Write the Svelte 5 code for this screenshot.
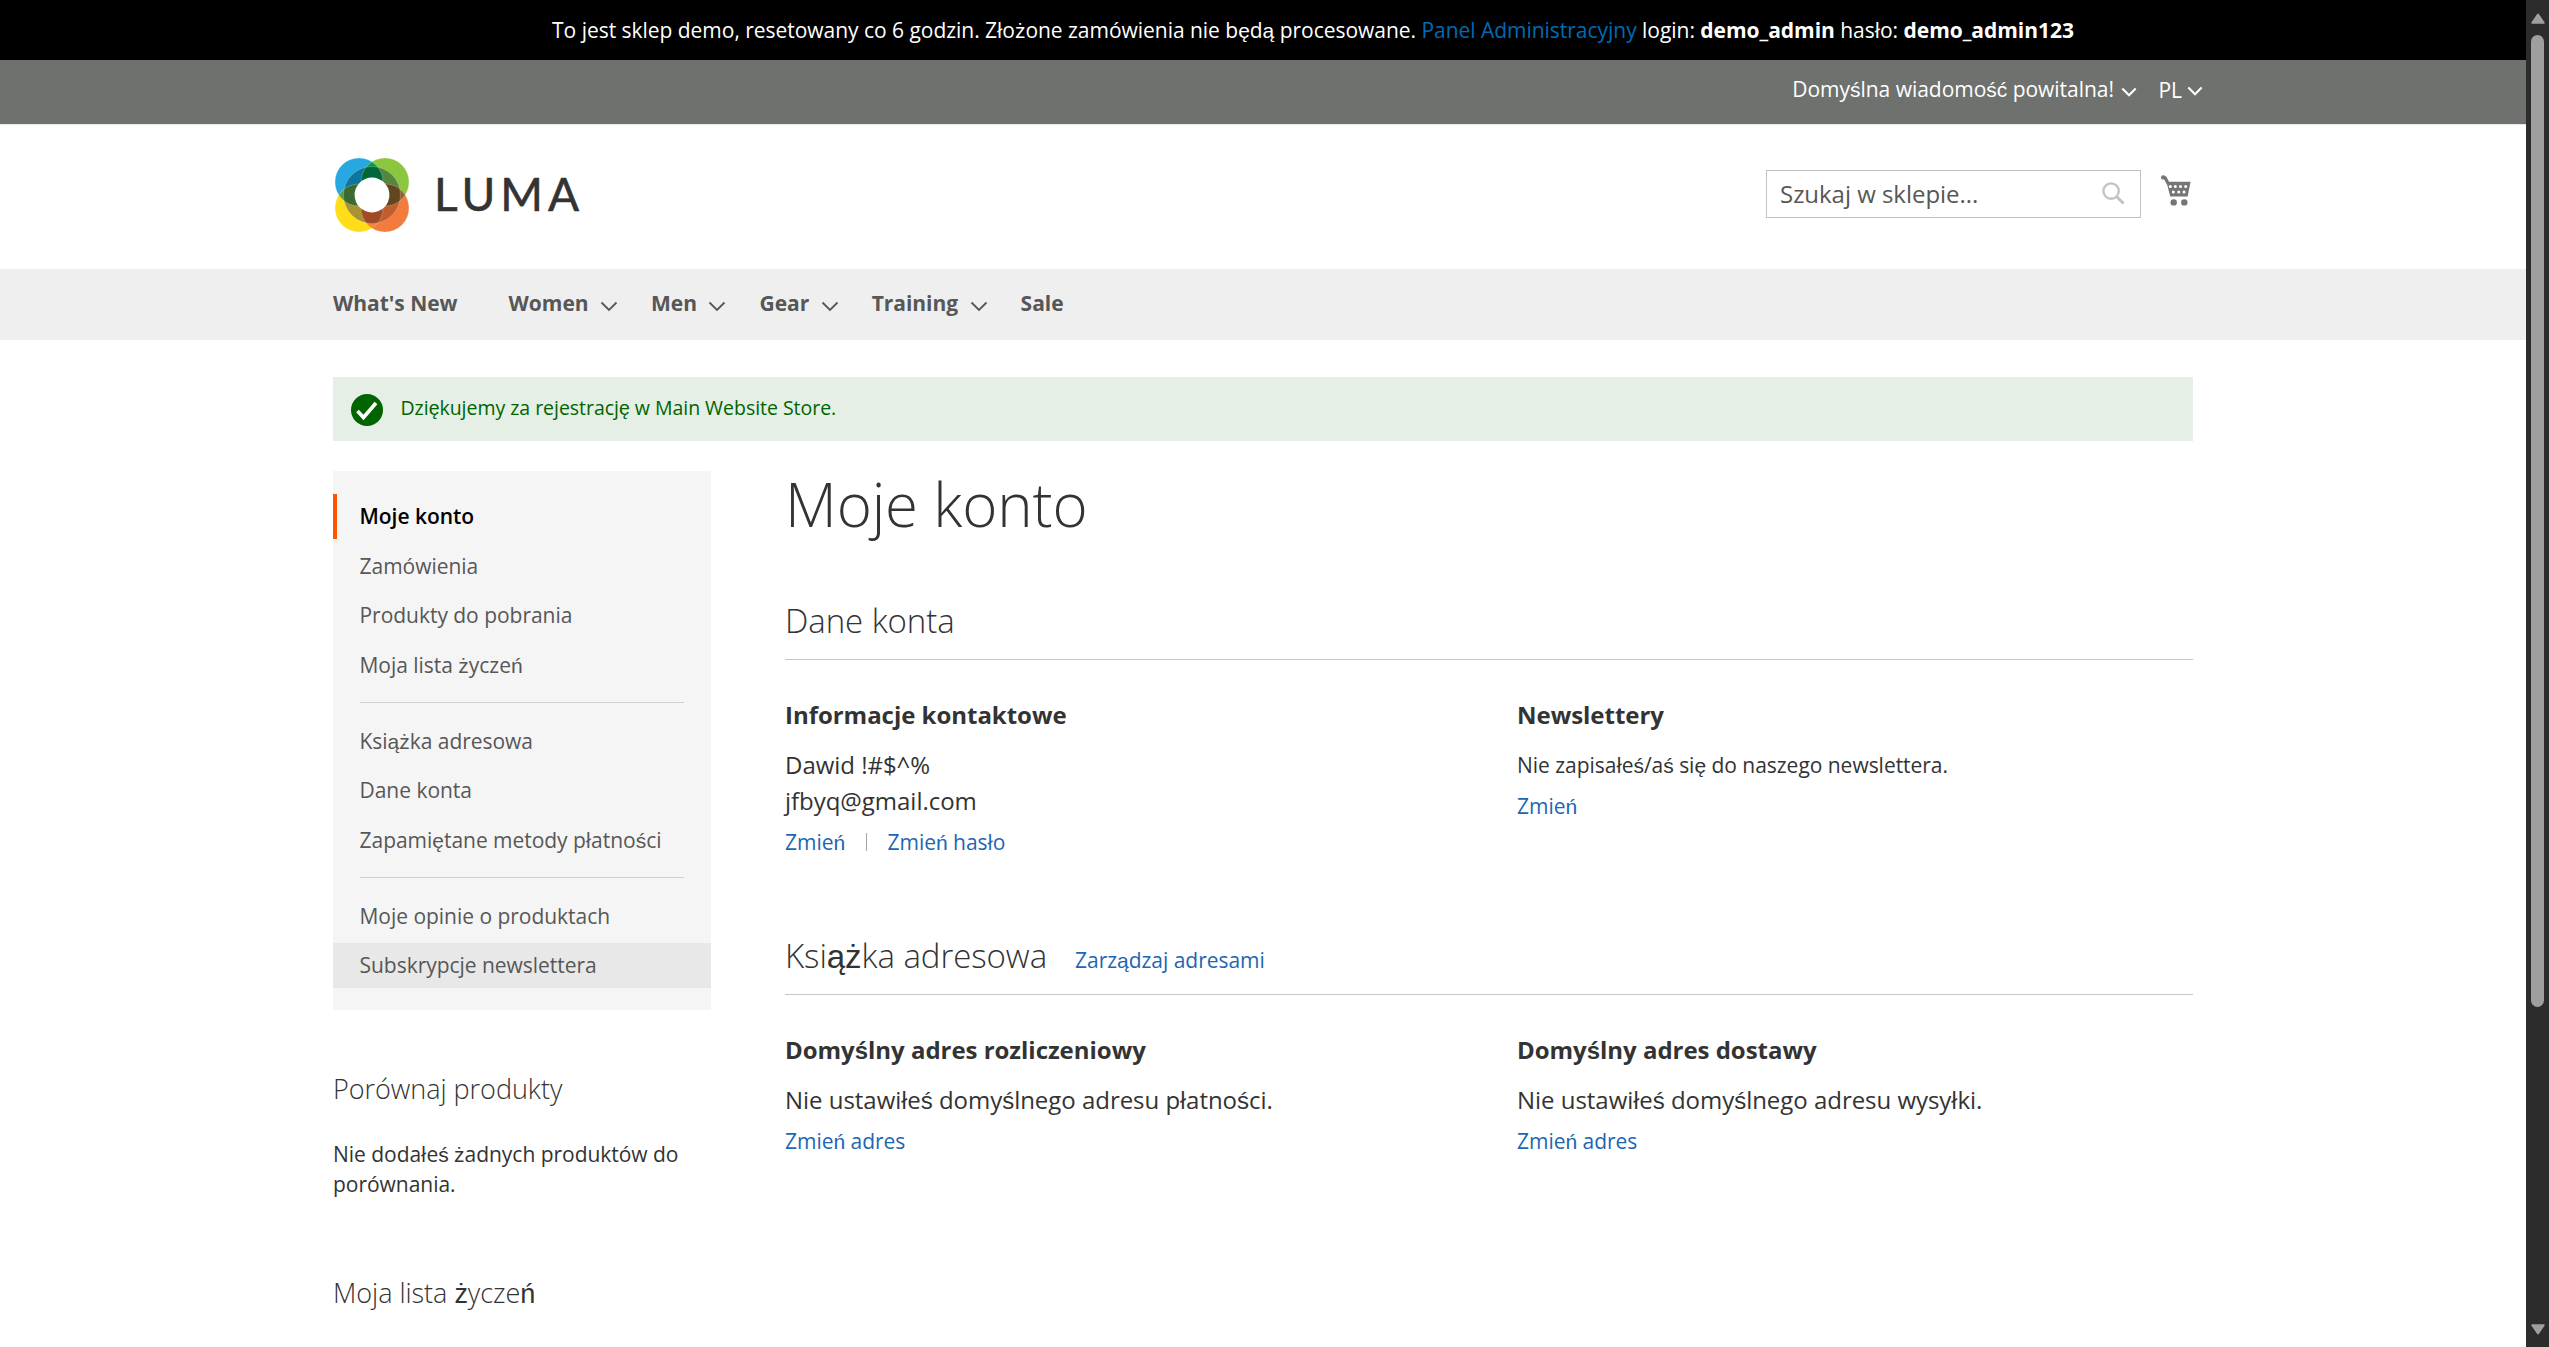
<script>
  const menu = [
    { label: "What's New" },
    { label: 'Women', sub: true },
    { label: 'Men', sub: true },
    { label: 'Gear', sub: true },
    { label: 'Training', sub: true },
    { label: 'Sale' }
  ];
  const account = [
    ['Moje konto', 'Zamówienia', 'Produkty do pobrania', 'Moja lista życzeń'],
    ['Książka adresowa', 'Dane konta', 'Zapamiętane metody płatności'],
    ['Moje opinie o produktach', 'Subskrypcje newslettera']
  ];
  // Splits a text into runs so that extended Latin letters can use the secondary face.
  const runs = (text) => text.split(/([ąćęńśźżĄĆĘŃŚŹŻ]+)/).filter(Boolean);
  const isExt = (run) => /^[ąćęńśźżĄĆĘŃŚŹŻ]/.test(run);
</script>

{#snippet t(text)}{#each runs(text) as run}{#if isExt(run)}<span class="ext">{run}</span>{:else}{run}{/if}{/each}{/snippet}

{#snippet chevron(cls)}
  <svg class={cls} viewBox="0 0 18 12" fill="none" stroke="currentColor"><path d="M1.500 1.500 9 9l7.500-7.500" /></svg>
{/snippet}

<div class="window">
  <div class="page">
    <div class="notice"><p>{@render t('To jest sklep demo, resetowany co 6 godzin. Złożone zamówienia nie będą procesowane.')} <a href="#admin">Panel Administracyjny</a> login: <b>demo_admin</b> hasło: <b>demo_admin123</b></p></div>

    <header>
      <div class="panel">
        <div class="wrap panel-in">
          <div class="welcome"><p>{@render t('Domyślna wiadomość powitalna!')}</p>{@render chevron('chev-s')}</div>
          <div class="lang"><p>PL</p>{@render chevron('chev-s')}</div>
        </div>
      </div>
      <div class="wrap head">
        <div class="logo">
          <svg class="mark" viewBox="0 0 74 74">
            <defs>
              <clipPath id="cb"><circle cx="24" cy="24" r="24" /></clipPath>
              <clipPath id="cy"><circle cx="24" cy="50" r="24" /></clipPath>
              <clipPath id="cg"><circle cx="50" cy="24" r="24" /></clipPath>
              <clipPath id="cr"><circle cx="37" cy="37" r="28.5" /></clipPath>
            </defs>
            <circle cx="24" cy="24" r="24" fill="#27a8e0" />
            <circle cx="50" cy="24" r="24" fill="#8cc63f" />
            <circle cx="24" cy="50" r="24" fill="#ffde17" />
            <circle cx="50" cy="50" r="24" fill="#f47b3e" />
            <circle clip-path="url(#cb)" cx="50" cy="24" r="24" fill="#00a14b" />
            <circle clip-path="url(#cb)" cx="24" cy="50" r="24" fill="#5c9a45" />
            <circle clip-path="url(#cg)" cx="50" cy="50" r="24" fill="#8a6236" />
            <circle clip-path="url(#cy)" cx="50" cy="50" r="24" fill="#f58634" />
            <g clip-path="url(#cr)">
              <circle cx="24" cy="24" r="24" fill="#0b769f" />
              <circle cx="50" cy="24" r="24" fill="#56853f" />
              <circle cx="24" cy="50" r="24" fill="#a79331" />
              <circle cx="50" cy="50" r="24" fill="#c15e2e" />
              <circle clip-path="url(#cb)" cx="50" cy="24" r="24" fill="#006838" />
              <circle clip-path="url(#cb)" cx="24" cy="50" r="24" fill="#3a6a30" />
              <circle clip-path="url(#cg)" cx="50" cy="50" r="24" fill="#62461e" />
              <circle clip-path="url(#cy)" cx="50" cy="50" r="24" fill="#a04b24" />
            </g>
            <g fill="none" stroke="#fff" stroke-opacity=".35" stroke-width=".6">
              <circle cx="24" cy="24" r="24" /><circle cx="50" cy="24" r="24" />
              <circle cx="24" cy="50" r="24" /><circle cx="50" cy="50" r="24" />
              <circle cx="37" cy="37" r="28.5" />
            </g>
            <circle cx="37" cy="37" r="17.4" fill="#fff" />
          </svg>
          <span class="brand">LUMA</span>
        </div>
        <div class="tools">
          <div class="search">
            <span>Szukaj w sklepie...</span>
            <svg class="lens" viewBox="0 0 24 24" fill="none" stroke="#c2c2c2" stroke-width="2.4"><circle cx="9.5" cy="9.5" r="8" /><path d="m15 15 7.500 7.500" stroke-width="3" /></svg>
          </div>
          <svg class="cart" viewBox="0 0 31 31">
            <circle cx="2.200" cy="2.400" r="2.200" fill="#757575" />
            <path d="M2 .6 5.300 1.400 8 6.800h21.500L26.700 21.500H9.200L6.400 10.500 3 4z" fill="#757575" />
            <circle cx="12.700" cy="27.400" r="3.200" fill="#757575" /><circle cx="23.300" cy="27.400" r="3.200" fill="#757575" />
            <g fill="#fff">
              <circle cx="9.300" cy="11.400" r="1.500" /><circle cx="14.300" cy="11.400" r="1.500" /><circle cx="19.500" cy="11.400" r="1.500" /><circle cx="24.700" cy="11.400" r="1.500" />
              <circle cx="12.300" cy="17" r="1.500" /><circle cx="17.700" cy="17" r="1.500" /><circle cx="23" cy="17" r="1.500" />
            </g>
          </svg>
        </div>
      </div>
    </header>

    <nav>
      <div class="wrap menu">
        {#each menu as item}
          <a href="#menu" class:sub={item.sub}>{item.label}{#if item.sub}{@render chevron('chev-m')}{/if}</a>
        {/each}
      </div>
    </nav>

    <div class="wrap">
      <div class="message">
        <svg class="ok" viewBox="0 0 32 32"><circle cx="16" cy="16" r="16" fill="#006400" /><path d="m6.500 17 6 6.500L25 9" fill="none" stroke="#fff" stroke-width="3.600" /></svg>
        <p>{@render t('Dziękujemy za rejestrację w Main Website Store.')}</p>
      </div>

      <div class="columns">
        <aside>
          <div class="account">
            {#each account as group, g}
              {#if g}<hr />{/if}
              <ul>
                {#each group as label, i}
                  <li class:current={g === 0 && i === 0} class:hover={g === 2 && i === 1}>{@render t(label)}</li>
                {/each}
              </ul>
            {/each}
          </div>
          <h3>Porównaj produkty</h3>
          <p class="empty">{@render t('Nie dodałeś żadnych produktów do porównania.')}</p>
          <h3 class="wish">{@render t('Moja lista życzeń')}</h3>
        </aside>

        <main>
          <h1>Moje konto</h1>
          <section>
            <div class="title"><h2>Dane konta</h2></div>
            <div class="boxes">
              <div class="box">
                <h4>Informacje kontaktowe</h4>
                <p>Dawid !#$^%<br />jfbyq@gmail.com</p>
                <div class="actions"><a href="#edit">{@render t('Zmień')}</a><i></i><a href="#pass">{@render t('Zmień hasło')}</a></div>
              </div>
              <div class="box">
                <h4>Newslettery</h4>
                <p class="small">{@render t('Nie zapisałeś/aś się do naszego newslettera.')}</p>
                <div class="actions"><a href="#news">{@render t('Zmień')}</a></div>
              </div>
            </div>
          </section>
          <section class="book">
            <div class="title"><h2>{@render t('Książka adresowa')}</h2><a href="#addresses">{@render t('Zarządzaj adresami')}</a></div>
            <div class="boxes">
              <div class="box">
                <h4>{@render t('Domyślny adres rozliczeniowy')}</h4>
                <p>{@render t('Nie ustawiłeś domyślnego adresu płatności.')}</p>
                <div class="actions"><a href="#billing">{@render t('Zmień adres')}</a></div>
              </div>
              <div class="box">
                <h4>{@render t('Domyślny adres dostawy')}</h4>
                <p>{@render t('Nie ustawiłeś domyślnego adresu wysyłki.')}</p>
                <div class="actions"><a href="#shipping">{@render t('Zmień adres')}</a></div>
              </div>
            </div>
          </section>
        </main>
      </div>
    </div>
  </div>

  <div class="scrollbar">
    <svg viewBox="0 0 14 11"><path d="M6 1.200a1.200 1.200 0 0 1 2 0l5.500 8a1 1 0 0 1-.8 1.500H1.300a1 1 0 0 1-.8-1.500z" fill="#9f9f9f" /></svg>
    <div class="thumb"></div>
    <svg class="down" viewBox="0 0 14 11"><path d="M6 1.200a1.200 1.200 0 0 1 2 0l5.500 8a1 1 0 0 1-.8 1.500H1.300a1 1 0 0 1-.8-1.500z" fill="#9f9f9f" /></svg>
  </div>
</div>

<style>
  :global(body) { margin: 0; overflow: hidden; }
  .window {
    display: flex; width: 2549px; height: 1347px; overflow: hidden; background: #fff;
    font: 400 21px/30px 'Open Sans', 'Liberation Sans', sans-serif; color: #333; letter-spacing: -.03px;
  }
  .window :global(*) { box-sizing: border-box; }
  .ext { font-family: 'Liberation Sans', sans-serif; line-height: 1; }
  svg { display: block; flex: none; }
  a { color: #1d66b3; text-decoration: none; }
  .notice a { color: #006bb4; }
  h1, h2, h3, h4, p, ul { margin: 0; padding: 0; font-weight: inherit; list-style: none; }
  .page { flex: 1; min-width: 0; overflow: hidden; }
  .wrap { width: 1860px; margin: 0 auto; }

  .notice { height: 60px; padding: 15px 0 0 100px; background: #000; color: #fff; text-align: center; white-space: nowrap; }
  .panel { height: 65px; background: #6e716e; border-bottom: 1px solid #e8e8e8; color: #fff; }
  .panel-in { display: flex; justify-content: flex-end; padding-top: 14px; white-space: nowrap; }
  .welcome, .lang { display: flex; }
  .lang { margin: 1px -10px 0 21px; }
  .panel :global(.chev-s) { width: 16px; height: 11px; margin: 13px 0 0 7.500px; stroke-width: 2.4; }
  .lang :global(.chev-s) { margin: 11px 0 0 5px; }

  .head { display: flex; justify-content: space-between; height: 144px; }
  .logo { display: flex; padding: 33px 0 0 2px; }
  .mark { width: 74px; height: 74px; }
  .brand { margin: 8px 0 0 25px; font: 400 46px/56px Lato, sans-serif; letter-spacing: 5px; -webkit-text-stroke: .6px #333; }
  .tools { display: flex; padding-top: 45px; margin-right: 1px; }
  .search { display: flex; justify-content: space-between; width: 375px; height: 48px; padding: 8px 15px 0 13px; border: 1px solid #c2c2c2; font-size: 24px; color: #575757; }
  .lens { width: 23px; height: 23px; margin-top: 3px; }
  .cart { width: 31px; height: 31px; margin: 5px 0 0 20px; }

  nav { height: 71px; background: #efefef; font-weight: 700; }
  .menu { display: flex; padding-top: 19px; }
  .menu a { display: flex; margin-right: 51px; color: #575757; }
  .menu a.sub { margin-right: 33px; }
  .menu :global(.chev-m) { width: 18px; height: 12px; margin: 13px 0 0 11.500px; stroke-width: 1.8; }

  .message { display: flex; height: 64px; margin: 37px 0 30px; padding: 16px 0 0 18px; background: #e5efe5; color: #006400; font-size: 19.500px; }
  .ok { width: 32px; height: 32px; margin: 1px 17.500px 0 0; }

  .columns { display: flex; gap: 74px; }
  aside { width: 378px; flex: none; }
  .account { height: 539px; padding-top: 23px; background: #f5f5f5; color: #575757; }
  .account ul { display: grid; gap: 4.500px; }
  .account li { height: 45px; padding: 7px 0 0 26.500px; white-space: nowrap; }
  .account .current { padding-left: 22.500px; border-left: 4px solid #ff5501; color: #000; font-weight: 600; }
  .account .hover { background: #e8e8e8; }
  hr { height: 1px; margin: 14px 27px 16px; border: 0; background: #d1d1d1; }
  h3 { margin-top: 61px; font-size: 27px; line-height: 36px; font-weight: 300; }
  .empty { margin-top: 32px; }
  .wish { margin-top: 76px; }

  main { flex: 1; min-width: 0; }
  h1 { font-size: 60px; line-height: 66px; font-weight: 300; letter-spacing: -.15px; }
  section { margin-top: 62px; }
  .book { margin-top: 74px; }
  .title { display: flex; align-items: baseline; gap: 28px; height: 61px; border-bottom: 1px solid #c6c6c6; }
  h2 { margin-top: -1px; font-size: 33px; line-height: 45px; font-weight: 300; letter-spacing: -.06px; }
  .boxes { display: grid; grid-template-columns: 732px 1fr; padding-top: 37px; }
  .box { font-size: 24px; line-height: 36px; }
  h4 { font-weight: 700; line-height: 36px; margin-bottom: 14px; }
  .small { font-size: 21px; }
  .actions { display: flex; font-size: 21px; margin-top: 5px; }
  .actions i { width: 1px; height: 18px; margin: 9px 20.500px 0 21px; background: #a3a3a3; }

  .scrollbar { display: flex; flex-direction: column; align-items: center; width: 23px; flex: none; padding: 13px 0 12px; background: #2c2c2c; }
  .scrollbar svg { width: 14px; height: 11px; }
  .thumb { width: 13px; height: 972px; margin-top: 11px; border-radius: 7px; background: #9f9f9f; }
  .scrollbar .down { margin-top: auto; transform: rotate(180deg); }
</style>
